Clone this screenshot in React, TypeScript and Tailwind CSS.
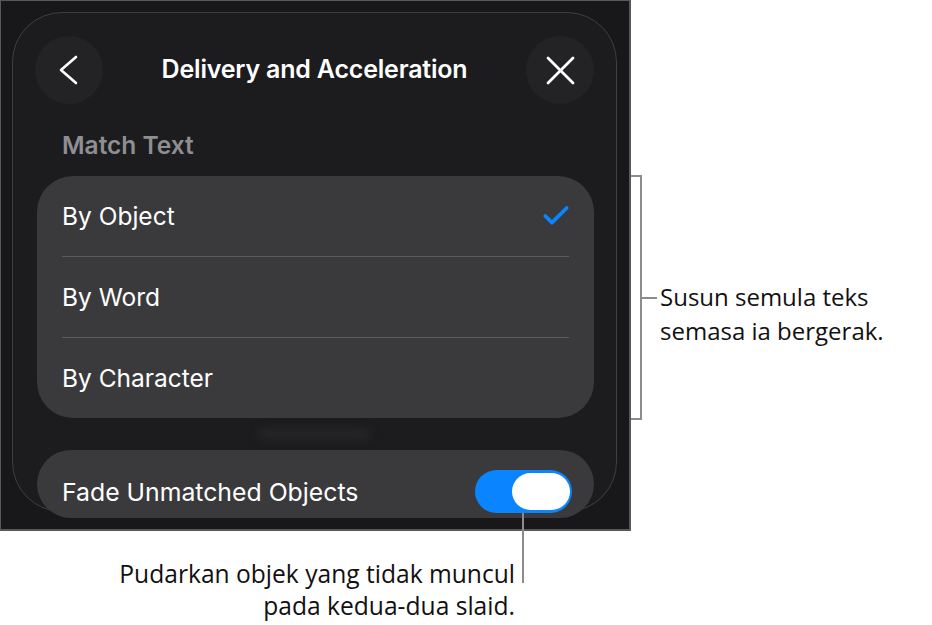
import { Check } from 'lucide-react';

const rows = ['By Object', 'By Word', 'By Character'];

function Toggle() {
  return (
    <div className="w-[97px] h-[43px] rounded-full bg-[#0a84ff] flex items-center justify-end pr-[2px]">
      <div className="w-[58px] h-[37px] rounded-full bg-white" />
    </div>
  );
}

export default function App() {
  return (
    <div className="relative w-[932px] h-[625px] bg-white overflow-hidden">
      {/* screenshot */}
      <div className="w-[631px] h-[531px] bg-[#18181a] border border-r-2 border-b-2 border-[#58585a] pt-[11px] pl-[11px] font-['Inter',sans-serif]">
        <div className="w-[605px] h-[500px] rounded-[50px] border border-[#3f3f42] bg-[#1c1c1e] pt-[23px] pl-[24px] pr-[22px]">
          <div className="h-[68px] flex items-center justify-between -ml-[2px]">
            <div className="w-[68px] h-[68px] rounded-full bg-[#232325]">
              <svg width="68" height="68" viewBox="0 0 68 68" fill="none" stroke="white" strokeWidth="2.6" strokeLinecap="round" strokeLinejoin="round">
                <polyline points="41,21 26,34 41,47" />
              </svg>
            </div>
            <div className="text-white text-[25px] font-semibold tracking-[-0.2px]">Delivery and Acceleration</div>
            <div className="w-[68px] h-[68px] rounded-full bg-[#232325]">
              <svg width="68" height="68" viewBox="0 0 68 68" fill="none" stroke="white" strokeWidth="2.8" strokeLinecap="round">
                <line x1="22" y1="22" x2="47" y2="47" />
                <line x1="47" y1="22" x2="22" y2="47" />
              </svg>
            </div>
          </div>

          <div className="mt-[27px] pl-[25px] h-[28px] leading-[28px] text-[24.5px] font-semibold text-[#8e8e93]">Match Text</div>

          <div className="mt-[17px] rounded-[36px] bg-[#3a3a3c]">
            {rows.map((r, i) => (
              <div key={r}>
                {i > 0 && <div className="mx-[25px] h-px bg-[#5c5c60]" />}
                <div className="h-[80px] px-[25px] flex items-center justify-between text-[24.5px] text-white">
                  <span>{r}</span>
                  {i === 0 && <Check size={32} strokeWidth={2.8} className="text-[#0a84ff] -mr-[3px]" />}
                </div>
              </div>
            ))}
          </div>

          <div className="h-[32px] flex items-center pl-[222px]">
            <div className="w-[111px] h-[10px] rounded-full bg-[#262628] blur-[4px]" />
          </div>

          <div className="h-[68px] rounded-[34px] bg-[#3a3a3c] pl-[25px] pr-[22px] flex items-start justify-between">
            <span className="mt-[27px] leading-[30px] text-[24.8px] text-white">Fade Unmatched Objects</span>
            <div className="mt-[20px]">
              <Toggle />
            </div>
          </div>
        </div>
      </div>

      {/* callouts */}
      <div className="absolute left-[631px] top-[175px] w-[11px] h-[245px] border-2 border-l-0 border-[#8c8c8c]" />
      <div className="absolute left-[642px] top-[297px] w-[15px] h-[2px] bg-[#8c8c8c]" />
      <div className="absolute left-[660px] top-[280px] text-[24px] leading-[34px] text-[#111] font-['Open_Sans',sans-serif]">
        Susun semula teks
        <br />
        semasa ia bergerak.
      </div>

      <div className="absolute left-[522px] top-[513px] w-[2px] h-[70px] bg-[#8c8c8c]" />
      <div className="absolute right-[417px] top-[558px] text-right text-[24.6px] leading-[32px] text-[#111] font-['Open_Sans',sans-serif]">
        Pudarkan objek yang tidak muncul
        <br />
        pada kedua-dua slaid.
      </div>
    </div>
  );
}
